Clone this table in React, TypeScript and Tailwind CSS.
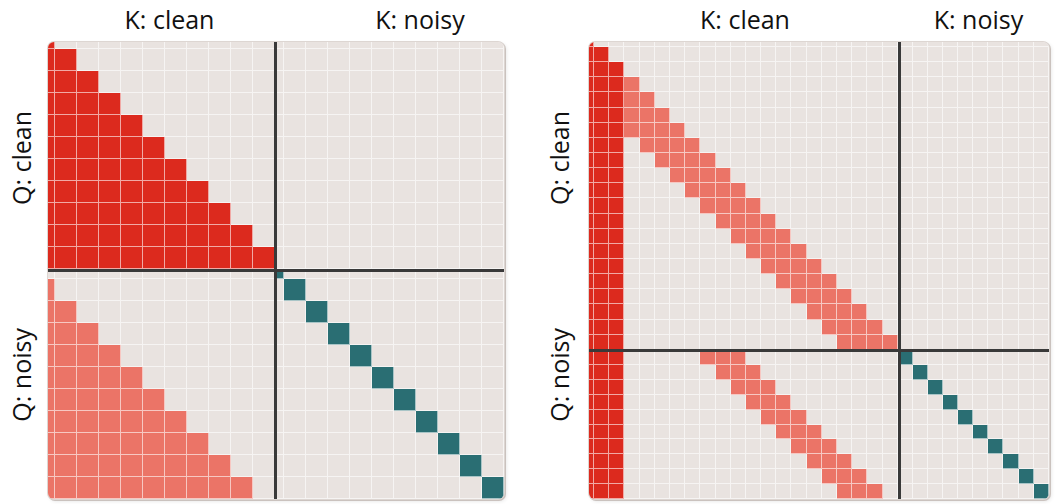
import React from "react";

const CELL = [
  "bg-[#e9e3e0]",
  "bg-[#dc2a1e]",
  "bg-[#eb7467]",
  "bg-[#2a6e73]",
];

function leftKind(r: number, c: number): number {
  const rClean = r <= 10;
  const cClean = c <= 10;
  if (rClean && cClean) return c <= r ? 1 : 0;
  if (rClean && !cClean) return 0;
  const j = r - 11;
  if (cClean) return c < j ? 2 : 0;
  const b = c - 11;
  return b === j ? 3 : 0;
}

function rightKind(r: number, c: number): number {
  const rClean = r <= 20;
  const cClean = c <= 20;
  if (rClean) {
    if (!cClean) return 0;
    if (c <= Math.min(r, 2)) return 1;
    if (c >= 3 && c <= r && c >= r - 3) return 2;
    return 0;
  }
  const j = r - 21;
  if (cClean) {
    if (c <= 2) return 1;
    if (c >= 8 + j && c <= 10 + j) return 2;
    return 0;
  }
  const b = c - 21;
  return b === j ? 3 : 0;
}

function Cells({ n, kind }: { n: number; kind: (r: number, c: number) => number }) {
  const out: React.ReactNode[] = [];
  for (let r = 0; r < n; r++) {
    for (let c = 0; c < n; c++) {
      out.push(
        <div key={r * n + c} className={`${CELL[kind(r, c)]} border-r border-b border-white/60`} />
      );
    }
  }
  return <>{out}</>;
}

const font = { fontFamily: '"Open Sans", "Noto Sans", sans-serif' };

function VLabel({ text }: { text: string }) {
  return (
    <span className="[writing-mode:vertical-rl] rotate-180 text-[25px] leading-[25px] text-[#111] whitespace-nowrap">
      {text}
    </span>
  );
}

function HLabel({ text }: { text: string }) {
  return <span className="text-[25px] leading-[25px] text-[#111] whitespace-nowrap">{text}</span>;
}

export default function App() {
  return (
    <div className="w-[1056px] h-[504px] bg-white flex overflow-hidden" style={font}>
      {/* Left panel */}
      <div className="w-[506px] flex flex-col shrink-0">
        <div className="h-[42px] flex items-start pt-[7px]">
          <div className="ml-[48px] w-[243px] flex justify-center">
            <HLabel text="K: clean" />
          </div>
          <div className="ml-[45px] w-[168px] flex justify-center">
            <HLabel text="K: noisy" />
          </div>
        </div>
        <div className="flex">
          <div className="w-[48px] flex flex-col">
            <div className="h-[232px] flex items-center pl-[9px]">
              <VLabel text="Q: clean" />
            </div>
            <div className="h-[202px] flex items-center pl-[9px]">
              <VLabel text="Q: noisy" />
            </div>
          </div>
          <div className="relative rounded-[6px] overflow-hidden shadow-[0_0_0_1px_#ddd6d2,1px_1px_0_1px_#cac2be,2px_2px_4px_rgba(0,0,0,0.12)]">
            <div className="grid grid-cols-[7px_repeat(10,22px)_9px_repeat(10,22px)] grid-rows-[7px_repeat(10,22px)_10px_repeat(10,22px)]">
              <Cells n={22} kind={leftKind} />
            </div>
            <div className="absolute left-[226px] top-0 bottom-0 w-[3px] bg-[#393939]" />
            <div className="absolute top-[227px] left-0 right-0 h-[3px] bg-[#393939]" />
          </div>
        </div>
      </div>

      {/* Right panel */}
      <div className="w-[550px] flex flex-col shrink-0">
        <div className="h-[42px] flex items-start pt-[7px]">
          <div className="ml-[83px] w-[312px] flex justify-center">
            <HLabel text="K: clean" />
          </div>
          <div className="w-[155px] flex justify-center">
            <HLabel text="K: noisy" />
          </div>
        </div>
        <div className="flex">
          <div className="w-[83px] flex flex-col">
            <div className="h-[232px] flex items-center pl-[41px]">
              <VLabel text="Q: clean" />
            </div>
            <div className="h-[202px] flex items-center pl-[41px]">
              <VLabel text="Q: noisy" />
            </div>
          </div>
          <div className="relative rounded-[6px] overflow-hidden shadow-[0_0_0_1px_#ddd6d2,1px_1px_0_1px_#cac2be,2px_2px_4px_rgba(0,0,0,0.12)]">
            <div className="grid grid-cols-[5px_repeat(20,15.2px)_repeat(10,15.1px)] grid-rows-[5px_repeat(20,15.15px)_repeat(10,14.95px)]">
              <Cells n={31} kind={rightKind} />
            </div>
            <div className="absolute left-[309px] top-0 bottom-0 w-[3px] bg-[#393939]" />
            <div className="absolute top-[307px] left-0 right-0 h-[3px] bg-[#393939]" />
          </div>
        </div>
      </div>
    </div>
  );
}
